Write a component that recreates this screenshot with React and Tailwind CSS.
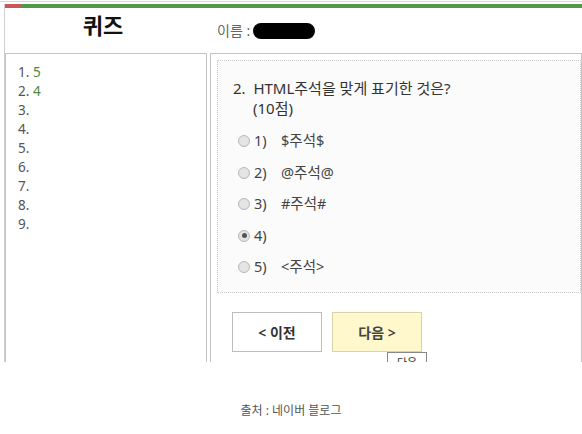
import React from 'react';

const font = { fontFamily: '"Noto Sans", "Noto Sans CJK KR", sans-serif' };

const answers = [
  { no: 1, value: '5' },
  { no: 2, value: '4' },
  { no: 3, value: '' },
  { no: 4, value: '' },
  { no: 5, value: '' },
  { no: 6, value: '' },
  { no: 7, value: '' },
  { no: 8, value: '' },
  { no: 9, value: '' },
];

const options = [
  { no: 1, text: '$주석$' },
  { no: 2, text: '@주석@' },
  { no: 3, text: '#주석#' },
  { no: 4, text: '', checked: true },
  { no: 5, text: '<주석>' },
];

const Radio = ({ checked }) => (
  <span className="flex items-center justify-center w-[12px] h-[12px] rounded-full border border-[#b8b8b8] bg-[#e4e4e4]">
    {checked && <span className="w-[5px] h-[5px] rounded-full bg-[#555]"></span>}
  </span>
);

export default function App() {
  return (
    <div className="w-[582px] h-[434px] bg-white flex flex-col font-['Noto_Sans','Noto_Sans_CJK_KR',sans-serif]" style={font}>
      {/* captured app frame */}
      <div className="h-[361px] overflow-hidden border-t border-[#d6d6d6] mt-[1px]">
        <div className="ml-[4px] mt-[2px] h-full border-l border-[#d0d0d0] flex flex-col">
          {/* top bar */}
          <div className="flex h-[4px]">
            <div className="w-[17px] bg-[#c9585a]"></div>
            <div className="flex-1 bg-[#4f9a45]"></div>
          </div>

          {/* header */}
          <div className="flex items-start h-[45px] pt-[4px]">
            <div className="w-[196px] text-center text-[22px] font-bold text-[#111] leading-[26px]">퀴즈</div>
            <div className="ml-[16px] mt-[10px] flex items-center text-[14px] leading-[18px] text-[#666]">
              이름 :
              <span className="ml-[3px] w-[62px] h-[16px] rounded-full bg-black"></span>
            </div>
          </div>

          <div className="flex flex-1 min-h-0">
            {/* answer list */}
            <div className="w-[202px] border border-[#c4c4c4] pl-[12px] pt-[9px] text-[13.5px] leading-[19px] text-[#555]">
              {answers.map((a) => (
                <div key={a.no}>
                  {a.no}. <span className="text-[#4e8a3c]">{a.value}</span>
                </div>
              ))}
            </div>

            {/* question panel */}
            <div className="ml-[3px] flex-1 border border-[#c4c4c4] pl-[6px] pt-[6px] relative">
              <div className="h-[233px] border border-dotted border-[#c8c8c8] bg-[#fbfbfb] pl-[15px] pt-[17px] text-[#333]">
                <div className="text-[15px] leading-[20px]">
                  <div>2.&nbsp; HTML주석을 맞게 표기한 것은?</div>
                  <div className="pl-[20px]">(10점)</div>
                </div>
                <div className="mt-[13px] flex flex-col gap-[11.5px]">
                  {options.map((o) => (
                    <div key={o.no} className="flex items-center h-[20px] pl-[5px] text-[14.5px]">
                      <Radio checked={o.checked} />
                      <span className="ml-[4px] w-[27px] text-[#444]">{o.no})</span>
                      <span className="text-[#444]">{o.text}</span>
                    </div>
                  ))}
                </div>
              </div>

              <div className="flex gap-[10px] mt-[19px] ml-[15px]">
                <button className="w-[90px] h-[40px] border border-[#bdbdbd] bg-white text-[14px] font-semibold text-[#333]">
                  &lt; 이전
                </button>
                <button className="w-[90px] h-[40px] border border-[#d9d3a8] bg-[#fff8cc] text-[14px] font-semibold text-[#444]">
                  다음 &gt;
                </button>
              </div>

              <div className="absolute left-[176px] top-[298px] w-[40px] h-[20px] border border-[#888] bg-white text-[11px] text-[#333] flex justify-center pt-[2px]">
                다음
              </div>
            </div>
          </div>
        </div>
      </div>

      {/* caption */}
      <div className="mt-[40px] text-center text-[12px] text-[#555]">출처 : 네이버 블로그</div>
    </div>
  );
}
